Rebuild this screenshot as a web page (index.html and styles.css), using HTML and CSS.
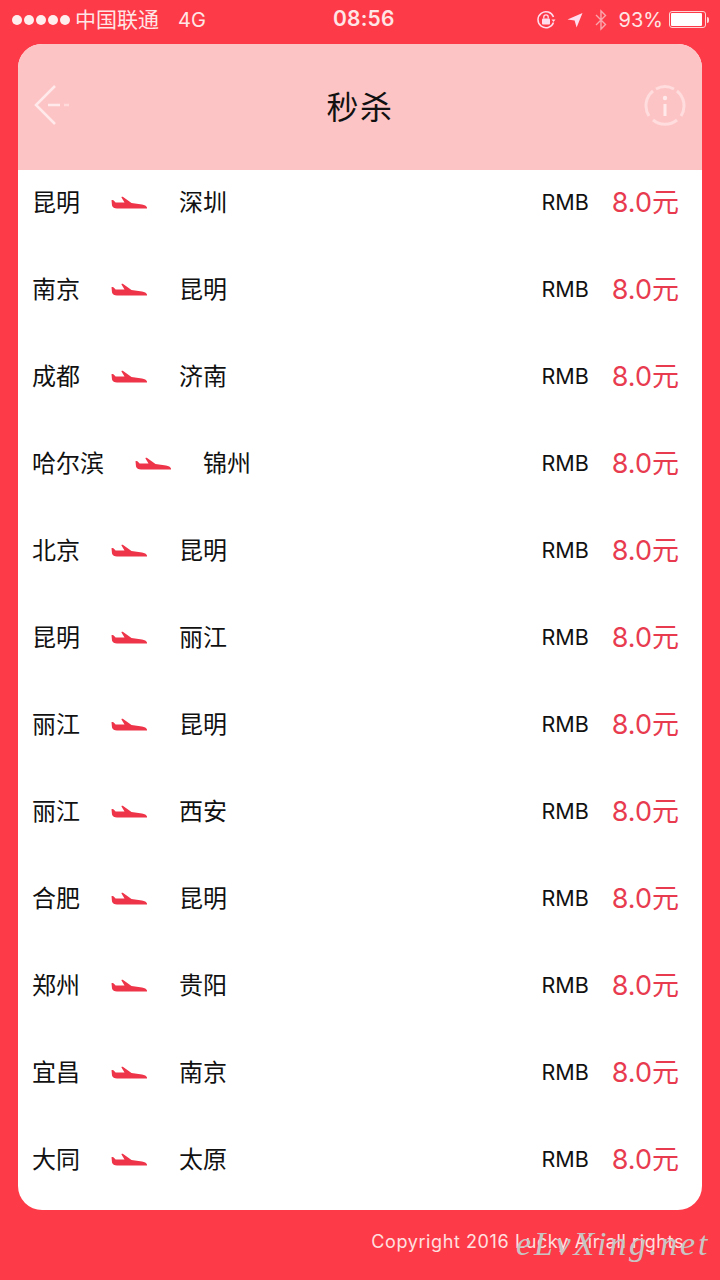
FILE: index.html
```html
<!DOCTYPE html>
<html lang="zh-CN">
<head>
<meta charset="utf-8">
<title>秒杀</title>
<link rel="stylesheet" href="styles.css">
</head>
<body>
<svg class="defs" width="0" height="0" aria-hidden="true"><defs>
<symbol id="plane" viewBox="0 0 36 14"><path d="M0.500 4.200 C1.500 3.600 2.500 4 3.200 5 L4.600 6.600 L13.500 6.600 L10.500 1.600 C10.200 0.800 11 0.400 11.800 0.800 L20.500 7 L31 8.400 C33.500 8.800 35.500 9.800 36 11.600 L36 12.600 L6 12.600 C3.500 12.600 1.500 11.600 1 9.600 Z"/></symbol>
</defs></svg>
<div class="status">
  <div class="status-left">
    <span class="dots"><i></i><i></i><i></i><i></i><i></i></span>
    <span class="carrier">中国联通</span>
    <span class="net">4G</span>
  </div>
  <div class="time">08:56</div>
  <div class="status-right">
    <svg class="ico-lock" width="22" height="22" viewBox="0 0 22 22"><path d="M18.500 13.500A8 8 0 1 1 18.500 8" fill="none" stroke="#fde" stroke-width="1.500"/><path d="M20.500 10.500l-2 2.400-2-2.400z" fill="#fde"/><rect x="7" y="9.500" width="8" height="6" rx="1" fill="#fde"/><path d="M8.800 9.500V8a2.200 2.200 0 0 1 4.400 0v1.500" fill="none" stroke="#fde" stroke-width="1.300"/></svg>
    <svg class="ico-loc" width="16" height="16" viewBox="0 0 16 16"><path d="M15.500 1 L0.500 7.600 L7.600 8.600 L9.600 15.500 Z" fill="#fde"/></svg>
    <svg class="ico-bt" width="14" height="22" viewBox="0 0 14 22"><path d="M2 6l9.500 9.500L7 20V2l4.500 4.500L2 16" fill="none" stroke="#f9a6ad" stroke-width="1.400"/></svg>
    <span class="pct">93%</span>
    <span class="batt"><span class="batt-fill"></span></span><span class="batt-tip"></span>
  </div>
</div>
<main class="card">
  <header class="head">
    <svg class="back" width="38" height="42" viewBox="0 0 38 42"><path d="M21 2 L2 21 L21 40" fill="none" stroke="#ffe9ea" stroke-width="2.500"/><path d="M14 21H26" stroke="#ffe9ea" stroke-width="2.500"/><path d="M30 21H35" stroke="#ffe9ea" stroke-width="2.500" opacity=".6"/></svg>
    <h1 class="title">秒杀</h1>
    <svg class="info" width="42" height="42" viewBox="0 0 42 42"><path d="M33 6A19 19 0 0 1 37 31 M33 35 A19 19 0 0 1 9 35 M5 31 A19 19 0 0 1 9 6 M12 4 A19 19 0 0 1 30 4" fill="none" stroke="#ffdcdd" stroke-width="3"/><circle cx="21" cy="13" r="2.200" fill="#ffe9ea"/><path d="M21 19V31" stroke="#ffe9ea" stroke-width="3"/></svg>
  </header>
  <ul class="list">
    <li class="row"><span class="city">昆明</span><svg class="plane"><use href="#plane"/></svg><span class="city">深圳</span><span class="rmb">RMB</span><span class="price">8.0元</span></li>
    <li class="row"><span class="city">南京</span><svg class="plane"><use href="#plane"/></svg><span class="city">昆明</span><span class="rmb">RMB</span><span class="price">8.0元</span></li>
    <li class="row"><span class="city">成都</span><svg class="plane"><use href="#plane"/></svg><span class="city">济南</span><span class="rmb">RMB</span><span class="price">8.0元</span></li>
    <li class="row"><span class="city">哈尔滨</span><svg class="plane"><use href="#plane"/></svg><span class="city">锦州</span><span class="rmb">RMB</span><span class="price">8.0元</span></li>
    <li class="row"><span class="city">北京</span><svg class="plane"><use href="#plane"/></svg><span class="city">昆明</span><span class="rmb">RMB</span><span class="price">8.0元</span></li>
    <li class="row"><span class="city">昆明</span><svg class="plane"><use href="#plane"/></svg><span class="city">丽江</span><span class="rmb">RMB</span><span class="price">8.0元</span></li>
    <li class="row"><span class="city">丽江</span><svg class="plane"><use href="#plane"/></svg><span class="city">昆明</span><span class="rmb">RMB</span><span class="price">8.0元</span></li>
    <li class="row"><span class="city">丽江</span><svg class="plane"><use href="#plane"/></svg><span class="city">西安</span><span class="rmb">RMB</span><span class="price">8.0元</span></li>
    <li class="row"><span class="city">合肥</span><svg class="plane"><use href="#plane"/></svg><span class="city">昆明</span><span class="rmb">RMB</span><span class="price">8.0元</span></li>
    <li class="row"><span class="city">郑州</span><svg class="plane"><use href="#plane"/></svg><span class="city">贵阳</span><span class="rmb">RMB</span><span class="price">8.0元</span></li>
    <li class="row"><span class="city">宜昌</span><svg class="plane"><use href="#plane"/></svg><span class="city">南京</span><span class="rmb">RMB</span><span class="price">8.0元</span></li>
    <li class="row"><span class="city">大同</span><svg class="plane"><use href="#plane"/></svg><span class="city">太原</span><span class="rmb">RMB</span><span class="price">8.0元</span></li>
  </ul>
</main>
<footer class="foot">Copyright 2016 Lucky Air all rights<span class="mark">eLvXing.net</span></footer>
</body>
</html>
```
FILE: styles.css
```css
* { box-sizing: border-box; }
html, body { margin: 0; padding: 0; }
body {
  width: 720px;
  height: 1280px;
  overflow: hidden;
  background: #fd3a47;
  font-family: "Inter", "Noto Sans CJK SC", sans-serif;
  position: relative;
}
.defs { position: absolute; }
.status {
  height: 44px;
  display: flex;
  align-items: center;
  justify-content: space-between;
  padding: 0 11px 5px 12px;
  color: #ffe6e6;
  position: relative;
}
.status-left { display: flex; align-items: center; width: 260px; }
.dots { display: flex; gap: 2px; margin-right: 5px; }
.dots i { width: 10px; height: 10px; border-radius: 50%; background: #ffeeee; display: block; }
.carrier { font: 21px/26px "Noto Sans CJK SC", sans-serif; margin-bottom: 3px; }
.net { font-size: 20px; line-height: 26px; margin-left: 19px; }
.time {
  position: absolute;
  left: 333px;
  top: 6px;
  font-size: 21px;
  line-height: 26px;
  font-weight: 600;
  letter-spacing: 0.2px;
}
.status-right { display: flex; align-items: center; }
.ico-loc { margin-left: 10px; }
.ico-bt { margin-left: 11px; }
.pct { font-size: 20px; line-height: 26px; margin-left: 11px; }
.batt {
  width: 37px;
  height: 17px;
  margin-left: 6px;
  border: 1px solid #ffd5d5;
  border-radius: 3px;
  padding: 1px;
  display: block;
}
.batt-fill { display: block; width: 93%; height: 100%; background: #fff; border-radius: 1px; }
.batt-tip { width: 2px; height: 6px; background: #ffd5d5; margin-left: 1px; border-radius: 0 2px 2px 0; }
.card {
  margin: 0 18px;
  width: 684px;
  height: 1166px;
  border-radius: 24px;
  overflow: hidden;
  background: #fff;
}
.head {
  height: 126px;
  background: #fdc4c5;
  display: flex;
  align-items: center;
  justify-content: space-between;
  padding: 0 16px 4px 16px;
}
.info { margin-top: 2px; }
.title {
  margin: 0;
  font: 400 32px/44px "Noto Sans CJK SC", sans-serif;
  color: #111;
  letter-spacing: 1.500px;
  transform: translate(2px, 0);
}
.list { list-style: none; margin: 0; padding: 0; }
.row {
  height: 87px;
  padding: 9px 23px 0 14px;
  display: flex;
  align-items: flex-start;
  color: #111;
}
.city { font: 24px/44px "Noto Sans CJK SC", sans-serif; }
.plane { width: 36px; height: 14px; margin: 17px 32px 0 31px; fill: #ee3449; }
.rmb { margin-left: auto; font-size: 21.500px; line-height: 44px; margin-top: 1px; }
.price { margin-left: 23px; font-size: 27px; line-height: 44px; margin-top: 2px; color: #e83b4f; font-weight: 400; }
.foot {
  position: relative;
  height: 70px;
  padding: 20px 36px 0 0;
  text-align: right;
  color: #ffe0e0;
  font-size: 18px;
  line-height: 24px;
  letter-spacing: 0.6px;
}
.mark {
  position: absolute;
  left: 516px;
  top: 14px;
  font: italic 34px/40px "Liberation Serif", serif;
  color: #c9c4c4;
  letter-spacing: 2.800px;
  white-space: nowrap;
}
```
